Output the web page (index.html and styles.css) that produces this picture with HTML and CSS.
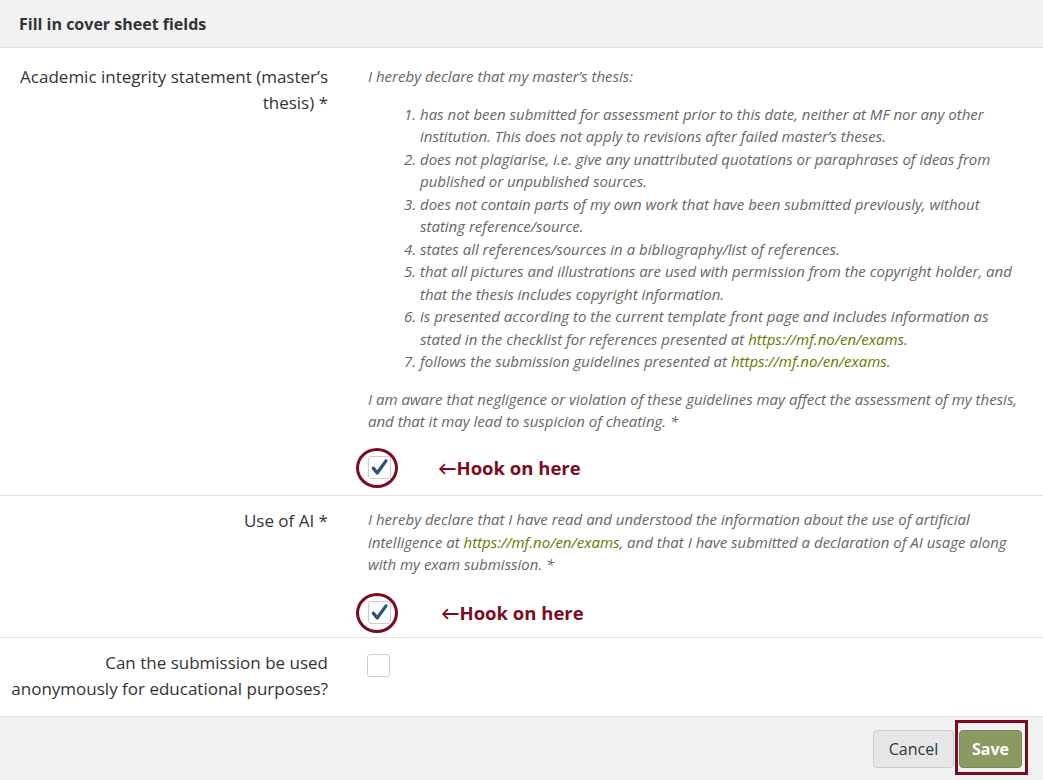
FILE: index.html
```html
<!DOCTYPE html>
<html lang="en">
<head>
<meta charset="utf-8">
<title>Fill in cover sheet fields</title>
<link rel="stylesheet" href="styles.css">
</head>
<body>
<div class="modal">
  <div class="header">
    <h1 class="title">Fill in cover sheet fields</h1>
  </div>

  <div class="row row-first">
    <div class="label">Academic integrity statement (master’s thesis) *</div>
    <div class="content">
      <p class="lead">I hereby declare that my master’s thesis:</p>
      <ol class="list">
        <li>has not been submitted for assessment prior to this date, neither at MF nor any other institution. This does not apply to revisions after failed master’s theses.</li>
        <li>does not plagiarise, i.e. give any unattributed quotations or paraphrases of ideas from published or unpublished sources.</li>
        <li>does not contain parts of my own work that have been submitted previously, without stating reference/source.</li>
        <li>states all references/sources in a bibliography/list of references.</li>
        <li>that all pictures and illustrations are used with permission from the copyright holder, and that the thesis includes copyright information.</li>
        <li>is presented according to the current template front page and includes information as stated in the checklist for references presented at <a class="link" href="#">https://mf.no/en/exams</a>.</li>
        <li>follows the submission guidelines presented at <a class="link" href="#">https://mf.no/en/exams</a>.</li>
      </ol>
      <p class="lead">I am aware that negligence or violation of these guidelines may affect the assessment of my thesis, and that it may lead to suspicion of cheating. *</p>
      <div class="check-line check-line-1">
        <span class="checkbox">
          <svg class="tick" viewBox="0 0 22 22" width="22" height="22" aria-hidden="true"><path d="M4.5 12.2 L8.6 17.2 L17.8 4.6" fill="none" stroke="#2f5176" stroke-width="3.4" stroke-linecap="round" stroke-linejoin="round"/></svg>
        </span>
        <span class="ring"></span>
        <span class="hook">←Hook on here</span>
      </div>
    </div>
  </div>

  <div class="row row-second">
    <div class="label">Use of AI *</div>
    <div class="content">
      <p class="lead">I hereby declare that I have read and understood the information about the use of artificial intelligence at <a class="link" href="#">https://mf.no/en/exams</a>, and that I have submitted a declaration of AI usage along with my exam submission. *</p>
      <div class="check-line check-line-2">
        <span class="checkbox">
          <svg class="tick" viewBox="0 0 22 22" width="22" height="22" aria-hidden="true"><path d="M4.5 12.2 L8.6 17.2 L17.8 4.6" fill="none" stroke="#2f5176" stroke-width="3.4" stroke-linecap="round" stroke-linejoin="round"/></svg>
        </span>
        <span class="ring"></span>
        <span class="hook hook-2">←Hook on here</span>
      </div>
    </div>
  </div>

  <div class="row row-third">
    <div class="label">Can the submission be used anonymously for educational purposes?</div>
    <div class="content">
      <span class="checkbox checkbox-empty"></span>
    </div>
  </div>

  <div class="footer">
    <button class="btn btn-cancel" type="button">Cancel</button>
    <span class="save-wrap">
      <button class="btn btn-save" type="button">Save</button>
      <span class="save-frame"></span>
    </span>
  </div>
</div>
</body>
</html>
```

FILE: styles.css
```css
* { box-sizing: border-box; }

html, body {
  margin: 0;
  padding: 0;
  background: #ffffff;
}

body {
  font-family: "Open Sans", Lato, "Liberation Sans", sans-serif;
  color: #333333;
}

.modal {
  width: 1043px;
  height: 780px;
  display: flex;
  flex-direction: column;
  background: #ffffff;
}

.header {
  height: 48px;
  flex: none;
  background: #f2f2f2;
  border-bottom: 1px solid #e2e2e2;
  display: flex;
  align-items: center;
  padding-left: 19px;
}

.title {
  margin: 0;
  font-size: 16px;
  font-weight: 700;
  color: #333333;
}

.row {
  display: grid;
  grid-template-columns: 328px 1fr;
  column-gap: 40px;
  border-bottom: 1px solid #e4e4e4;
  flex: none;
}

.label {
  text-align: right;
  font-size: 17px;
  line-height: 26px;
  color: #333333;
}

.content {
  font-size: 15px;
  line-height: 22.5px;
  font-style: italic;
  color: #666666;
  padding-right: 20px;
}

.lead {
  margin: 0;
}

.list {
  margin: 15px 0 15px 0;
  padding-left: 52px;
}

.link {
  color: #5f7a00;
  text-decoration: none;
}

.row-first {
  padding-top: 16px;
  height: 448px;
}

.row-first .content {
  padding-top: 1px;
}

.row-second {
  padding-top: 12px;
  height: 142px;
}

.row-third {
  padding-top: 12px;
  flex: 1;
  border-bottom: none;
}

.check-line {
  position: relative;
  height: 23px;
  display: flex;
  align-items: center;
}

.check-line-1 { margin-top: 23px; }
.check-line-2 { margin-top: 25px; }

.checkbox {
  width: 23px;
  height: 23px;
  border: 1px solid #cccccc;
  border-radius: 3px;
  background: #ffffff;
  display: inline-flex;
  align-items: center;
  justify-content: center;
  flex: none;
}

.tick {
  display: block;
}

.checkbox-empty {
  margin-top: 4px;
  margin-left: -1px;
}

.ring {
  position: absolute;
  left: -12px;
  top: -8px;
  width: 42px;
  height: 40px;
  border: 3px solid #7e0a22;
  border-radius: 50%;
}

.hook {
  margin-left: 47px;
  font-style: normal;
  font-weight: 700;
  font-size: 18.5px;
  color: #7e0a22;
  line-height: 23px;
}

.hook-2 {
  margin-left: 50px;
}

.footer {
  height: 64px;
  flex: none;
  background: #f2f2f2;
  border-top: 1px solid #e2e2e2;
  display: flex;
  justify-content: flex-end;
  align-items: center;
  gap: 5px;
  padding-right: 21px;
  padding-top: 1px;
}

.btn {
  height: 38px;
  border-radius: 4px;
  font-family: "Open Sans", Lato, "Liberation Sans", sans-serif;
  font-size: 16px;
  cursor: pointer;
  padding: 0;
}

.btn-cancel {
  width: 81px;
  background: #e6e6e6;
  border: 1px solid #cccccc;
  color: #2e3a48;
}

.save-wrap {
  position: relative;
  display: inline-flex;
}

.btn-save {
  width: 63px;
  background: #8a9a62;
  border: 1px solid #7b8a55;
  color: #ffffff;
  font-weight: 700;
}

.save-frame {
  position: absolute;
  left: -4px;
  top: -10px;
  width: 73px;
  height: 55px;
  border: 3px solid #7e0a22;
  pointer-events: none;
}
```
